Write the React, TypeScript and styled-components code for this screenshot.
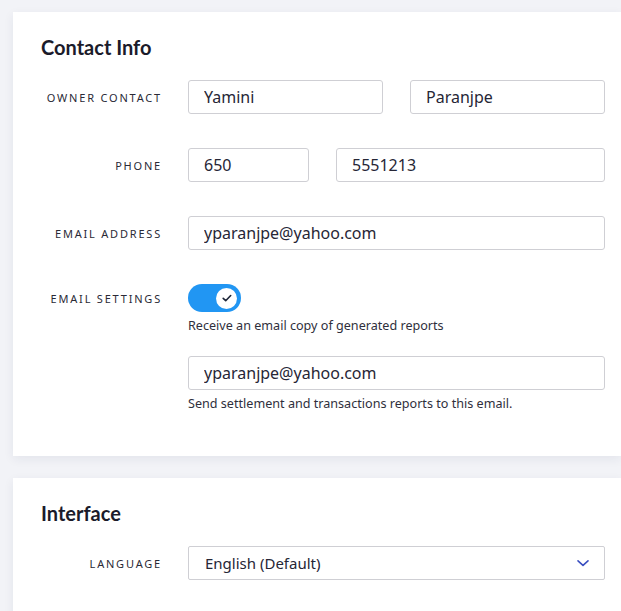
import styled, { createGlobalStyle } from 'styled-components';

const GlobalStyle = createGlobalStyle`
  html, body {
    margin: 0;
    padding: 0;
    background: #f2f3f7;
    font-family: "Noto Sans", Lato, sans-serif;
    color: #22222e;
  }
  * {
    box-sizing: border-box;
  }
`;

export default function App() {
  return (
    <>
      <GlobalStyle />
      <Page>
        <Card>
          <Title>Contact Info</Title>
          <Form>
            <Row>
              <Label>Owner Contact</Label>
              <Split $cols="1fr 1fr">
                <Input defaultValue="Yamini" />
                <Input defaultValue="Paranjpe" />
              </Split>
            </Row>
            <Row>
              <Label>Phone</Label>
              <Split $cols="121px 1fr">
                <Input defaultValue="650" />
                <Input defaultValue="5551213" />
              </Split>
            </Row>
            <Row>
              <Label>Email Address</Label>
              <Input defaultValue="yparanjpe@yahoo.com" />
            </Row>
            <Row>
              <Label $h={28}>Email Settings</Label>
              <Stack>
                <Toggle aria-checked="true" role="switch">
                  <Knob>
                    <svg width="12" height="12" viewBox="0 0 12 12" fill="none">
                      <path d="M2.2 6.3l2.5 2.4 5-5.2" stroke="#1d2538" strokeWidth="1.6" strokeLinecap="round" strokeLinejoin="round" />
                    </svg>
                  </Knob>
                </Toggle>
                <Hint $top={5}>Receive an email copy of generated reports</Hint>
                <Input $top={22} defaultValue="yparanjpe@yahoo.com" />
                <Hint $top={5}>Send settlement and transactions reports to this email.</Hint>
              </Stack>
            </Row>
          </Form>
        </Card>
        <Card $last>
          <Title>Interface</Title>
          <Form>
            <Row>
              <Label>Language</Label>
              <Select>
                <span>English (Default)</span>
                <svg width="14" height="10" viewBox="0 0 14 10" fill="none">
                  <path d="M2 2.8l5 4.6 5-4.6" stroke="#3a4fc0" strokeWidth="1.6" strokeLinecap="round" strokeLinejoin="round" />
                </svg>
              </Select>
            </Row>
          </Form>
        </Card>
      </Page>
    </>
  );
}

const Page = styled.div`
  display: flex;
  flex-direction: column;
  gap: 22px;
  padding: 12px 0 0 13px;
  min-height: 611px;
`;

const Card = styled.section<{ $last?: boolean }>`
  background: #fff;
  box-shadow: 0 3px 10px rgba(30, 40, 80, 0.07);
  padding: 23px 16px ${p => (p.$last ? '40px' : '44px')} 28px;
`;

const Title = styled.h2`
  margin: 0 0 21px;
  font-family: Lato, "Noto Sans", sans-serif;
  font-size: 20px;
  line-height: 24px;
  font-weight: 700;
  color: #1b1b2a;
`;

const Form = styled.div`
  display: flex;
  flex-direction: column;
  gap: 34px;
`;

const Row = styled.div`
  display: grid;
  grid-template-columns: 120px 1fr;
  column-gap: 27px;
  align-items: start;
`;

const Label = styled.label<{ $h?: number }>`
  height: ${p => p.$h ?? 34}px;
  display: flex;
  align-items: center;
  justify-content: flex-end;
  white-space: nowrap;
  font-size: 11px;
  letter-spacing: 1.8px;
  margin-right: -1px;
  text-transform: uppercase;
  color: #2a2a36;
`;

const Split = styled.div<{ $cols: string }>`
  display: grid;
  grid-template-columns: ${p => p.$cols};
  column-gap: 27px;
`;

const Input = styled.input<{ $top?: number }>`
  display: block;
  width: 100%;
  height: 34px;
  margin-top: ${p => p.$top ?? 0}px;
  padding: 0 15px;
  border: 1px solid #cfcfd4;
  border-radius: 3px;
  background: #fff;
  font-family: "Noto Sans", Lato, sans-serif;
  font-size: 16px;
  color: #262636;
  outline: none;
`;

const Stack = styled.div`
  display: flex;
  flex-direction: column;
  align-items: flex-start;
`;

const Toggle = styled.div`
  width: 53px;
  height: 28px;
  border-radius: 14px;
  background: #2196f3;
  display: flex;
  align-items: center;
  justify-content: flex-end;
  padding-right: 4px;
`;

const Knob = styled.span`
  width: 21px;
  height: 21px;
  border-radius: 50%;
  background: #fff;
  display: flex;
  align-items: center;
  justify-content: center;
`;

const Hint = styled.p<{ $top: number }>`
  margin: ${p => p.$top}px 0 0;
  font-size: 12.6px;
  line-height: 17px;
  color: #2f2f3c;
`;

const Select = styled.div`
  height: 34px;
  display: flex;
  align-items: center;
  justify-content: space-between;
  padding: 0 14px 0 16px;
  border: 1px solid #cfcfd4;
  border-radius: 2px;
  font-size: 15px;
  color: #262636;
`;
